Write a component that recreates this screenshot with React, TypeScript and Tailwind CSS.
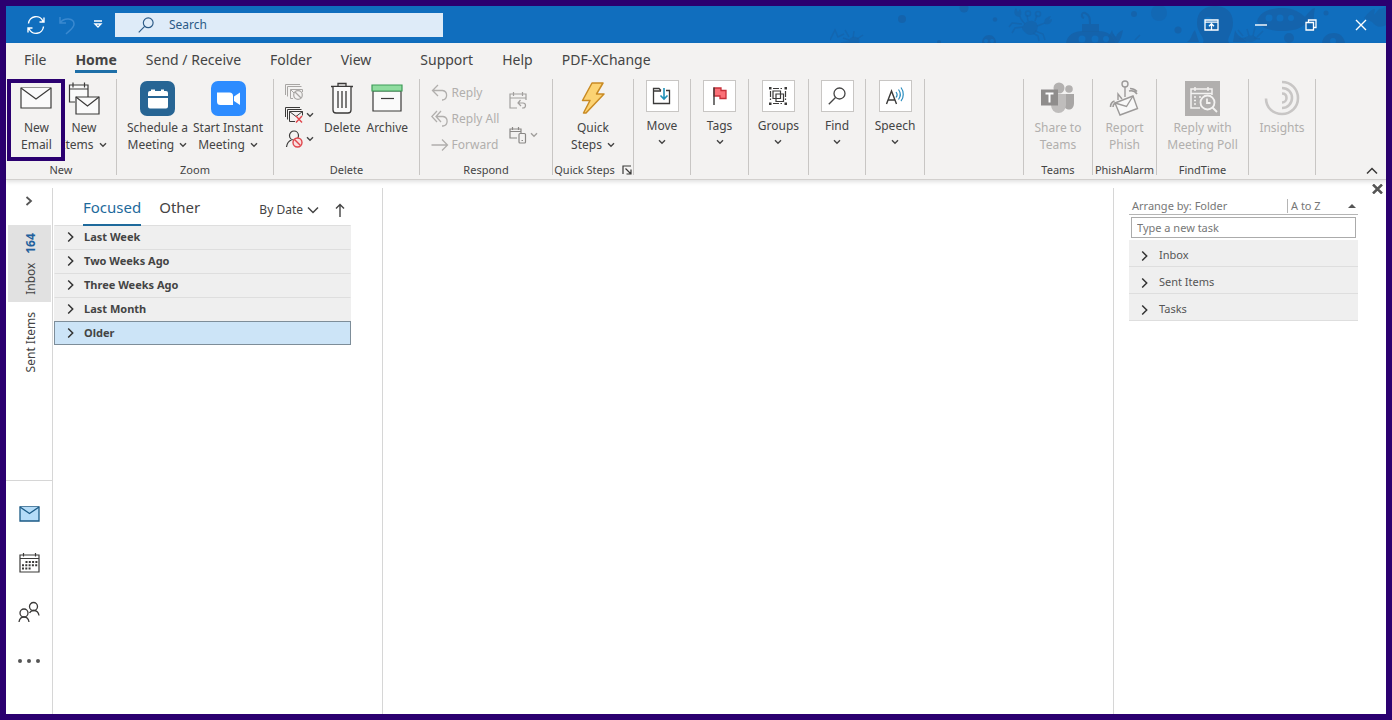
import * as React from "react"
import clsx from "clsx"

const ribbonTabs = ["File", "Home", "Send / Receive", "Folder", "View", "Support", "Help", "PDF-XChange"]
const mailGroups = ["Last Week", "Two Weeks Ago", "Three Weeks Ago", "Last Month", "Older"]
const taskFolders = ["Inbox", "Sent Items", "Tasks"]

type IconProps = { className?: string }

const Chevron = ({ className }: IconProps) => (
  <svg width="8" height="6" viewBox="0 0 8 6" fill="none" stroke="currentColor" strokeWidth="1.4" className={className}>
    <path d="M1 1.2 4 4.2 7 1.2" />
  </svg>
)

const RowChevron = () => (
  <svg width="8" height="12" viewBox="0 0 8 12" fill="none" stroke="#333" strokeWidth="1.5">
    <path d="M1.2 1.5 5.700 6 1.2 10.5" />
  </svg>
)

// Sea creatures drawn faintly behind the window controls
const TitleBarArt = () => (
  <svg width="556" height="37" viewBox="0 0 556 37" className="pointer-events-none absolute top-0 right-0" fill="#1660a6" stroke="none">
    <g fillOpacity="0.75">
      <circle cx="72" cy="13" r="4" />
      <circle cx="134" cy="2" r="4.500" />
      <circle cx="165" cy="13.500" r="2.200" />
      <circle cx="304" cy="8" r="3" />
      <circle cx="329" cy="7" r="8" fillOpacity="0.4" />
      <circle cx="348" cy="24" r="3.500" />
      <circle cx="496" cy="7" r="2.500" />
      <circle cx="459" cy="32" r="5" />
      <circle cx="109" cy="36" r="2" />
      {/* periscope submarine */}
      <path d="M236 37c1-8 8-12 17-12h16c8 0 14 4 16 12z" />
      <path d="M252 18h17v8h-17z" />
      <path d="M260 18c0-5 0-9-5-11-4-1-4 4-1 5" fill="none" stroke="#1660a6" strokeWidth="2" strokeOpacity="0.75" />
      <path d="M278 37c-2-5 2-8 4-13 1 4 2 5 4 7 1-4 4-6 7-7-1 5-2 9-5 13z" />
      {/* octopus */}
      <path d="M373 37c3-5-6-10-6-20C367 5 375 0 385 0s18 5 18 17c0 10-7 15-4 20z" />
      <path d="M365 24c-4 4-3 9-8 12h12zM405 24c2 6 8 8 12 12h-14z" />
      {/* fish */}
      <path d="M427 15C430 6 440 2 452 2s19 5 23 9c3-4 6-8 10-9-1 6-2 10 0 14 1 4 2 6 0 9-5-1-8-4-10-7-5 5-12 7-23 7s-22-3-25-10z" />
      {/* diver */}
      <path d="M492 37c1-7 6-10 12-10s10 4 11 10z" />
      <path d="M152 37c0-5 3-8 7-8s7 3 7 8z" />
    </g>
    <g fill="#106ebe">
      <circle cx="252" cy="33" r="3.500" />
      <circle cx="265" cy="33" r="3.500" />
      <circle cx="276" cy="33" r="3" />
      <circle cx="378" cy="16" r="5" />
      <circle cx="439" cy="12" r="3.500" />
      <circle cx="450" cy="12" r="3.500" />
      <circle cx="461" cy="12" r="3" />
      <circle cx="156" cy="35" r="2" />
      <circle cx="162" cy="35" r="2" />
      <circle cx="503" cy="35" r="3" />
    </g>
    <circle cx="378" cy="16" r="2" />
    {/* crabs */}
    <g fillOpacity="0.6">
      <path d="M192 23c1-6 6-9 11-8s6 7 3 11-8 5-14-3z" />
      <path d="M186 2c-3 4-2 8 3 9 3-2 3-5 1-8l-2 3zM221 10c-5 1-8 4-6 8 4 1 7-1 7-5l-3 1z" />
      <g fill="none" stroke="#1660a6" strokeWidth="1.500" strokeOpacity="0.6">
        <path d="M190 10c0 4 3 5 5 8M215 17c-3 1-5 2-8 3M198 15l-1-6M205 15l2-6M192 18l-10-1-3 4M193 21l-8 1-3 5M205 25l8 3 2 6M203 27l5 3 1 5" />
        <circle cx="198" cy="7.500" r="2.500" />
        <circle cx="208" cy="8" r="2.500" />
        <path d="M15 24l4 7M24 25l-1 7M33 29l-6 4M19 34l-6-2M18 36l-7 1M283 28l3 6M0 34l5-10 3 7 6-3M310 29l-5 5M408 24l5 6M433 25l-6 6M417 23l2 7M425 21l-2 9M409 33l7-1M430 33l-6-1" />
      </g>
      <path d="M18 37c1-5 4-7 8-6s4 4 3 6zM414 33c2-4 10-5 13-1 0 4-11 6-13 1zM534 12c5-6 8-9 11-9l-1 6 5-6c3 0 5-1 7-3v19c-6 3-10 2-14-3z" />
    </g>
  </svg>
)

const Envelope = ({ className }: IconProps) => (
  <svg width="32" height="22" viewBox="0 0 32 22" fill="#fafafa" stroke="#3b3a39" strokeWidth="1.2" className={className}>
    <path d="M1 1h30v20H1z" />
    <path d="M1 1l15 11L31 1" />
  </svg>
)

const NewItemsIcon = () => (
  <svg width="32" height="34" viewBox="0 0 32 34" fill="#fafafa" stroke="#3b3a39" strokeWidth="1.2">
    <path d="M7 21H1.500V4H20v12M1.500 8H20M5 1.500v5M16.500 1.500v5" />
    <path d="M8 16h23v17H8z" />
    <path d="M8 16l11.500 9L31 16" fill="none" />
  </svg>
)

const ZoomCalendarIcon = () => (
  <svg width="35" height="35" viewBox="0 0 35 35">
    <rect width="35" height="35" rx="7" fill="#276594" />
    <path d="M8 12a2 2 0 0 1 2-2h1V8.500h4V10h6V8.500h3V10h2a2 2 0 0 1 2 2v3H8zM8 17h20v8.500a2 2 0 0 1-2 2H10a2 2 0 0 1-2-2z" fill="#fff" />
  </svg>
)

const ZoomVideoIcon = () => (
  <svg width="35" height="35" viewBox="0 0 35 35">
    <rect width="35" height="35" rx="7" fill="#2d8cff" />
    <path d="M6 11.500h12.500a3.500 3.500 0 0 1 3.500 3.500v9H9.500A3.500 3.500 0 0 1 6 20.500zM23 15.500l6-4v12.500l-6-4z" fill="#fff" />
  </svg>
)

const IgnoreIcon = () => (
  <svg width="18" height="16" viewBox="0 0 18 16" fill="none" stroke="#a8a6a4">
    <path d="M.5 11V.5H15M2.500 12.500v-10H16.500" />
    <path d="M8 14.500H5.500v-9h12V8M5.500 5.500 9 9" />
    <circle cx="13" cy="11" r="4.300" fill="#f3f2f1" strokeWidth="1.200" />
    <path d="m10 8 6 6" strokeWidth="1.200" />
  </svg>
)

const CleanUpIcon = () => (
  <svg width="18" height="16" viewBox="0 0 18 16" fill="none" stroke="#3b3a39">
    <path d="M.5 10V.5H15M2.500 12.500v-10h14" />
    <path d="M10 14.500H4.500v-10h13v4M4.500 4.500l6.500 5 6.500-5" />
    <path d="m11 9 6 6.500M17 9l-6 6.500" stroke="#e0464c" strokeWidth="1.400" />
  </svg>
)

const JunkIcon = () => (
  <svg width="18" height="18" viewBox="0 0 18 18" fill="none" stroke="#3b3a39" strokeWidth="1.200">
    <circle cx="9" cy="5.500" r="4.500" />
    <path d="M1.500 17c.5-4 2-6 5-7" />
    <circle cx="12.500" cy="12.500" r="4.500" stroke="#e0464c" fill="#f9dfdf" strokeWidth="1.400" />
    <path d="m9.500 9.500 6 6" stroke="#e0464c" strokeWidth="1.400" />
  </svg>
)

const TrashIcon = () => (
  <svg width="24" height="32" viewBox="0 0 24 32" fill="none" stroke="#3b3a39" strokeWidth="1.300">
    <path d="M1 4.500h22M8 4V1.500h8V4" />
    <path d="M3 5v23a3 3 0 0 0 3 3h12a3 3 0 0 0 3-3V5" fill="#fafafa" />
    <path d="M8 9v17M12 9v17M16 9v17" />
  </svg>
)

const ArchiveIcon = () => (
  <svg width="32" height="28" viewBox="0 0 32 28" strokeWidth="1.200">
    <path d="M2 7h28v20H2z" fill="#fafafa" stroke="#3b3a39" />
    <path d="M1 1h30v6H1z" fill="#8fdc9f" stroke="#3d9b58" />
    <path d="M10 14.500h13" stroke="#3b3a39" />
  </svg>
)

const ReplyIcon = () => (
  <svg width="18" height="18" viewBox="0 0 18 18" fill="none" stroke="#b1afad" strokeWidth="1.300">
    <path d="M7 1 1.500 6.500 7 12M2 6.500h9.500a4.800 4.800 0 0 1 0 9.500H11" />
  </svg>
)

const ReplyAllIcon = () => (
  <svg width="18" height="18" viewBox="0 0 18 18" fill="none" stroke="#b1afad" strokeWidth="1.300">
    <path d="M6 1 .800 6.500 6 12M10 1 5 6.500l5 5.500M5 6.500h7a4.800 4.800 0 0 1 0 9.500h-1" />
  </svg>
)

const ForwardIcon = () => (
  <svg width="18" height="14" viewBox="0 0 18 14" fill="none" stroke="#b1afad" strokeWidth="1.300">
    <path d="M.500 7H16M11 1.500 16.500 7 11 12.500" />
  </svg>
)

const MeetingReplyIcon = () => (
  <svg width="18" height="19" viewBox="0 0 18 19" fill="none" stroke="#a19f9d" strokeWidth="1.200">
    <path d="M8 17H1V3h16v6M1 7h16M4.500 1v4M13.500 1v4" />
    <path d="M11.500 9 9 12l3 3M9 12h5a2.500 2.500 0 0 1 0 5h-1" />
  </svg>
)

const RespondMoreIcon = () => (
  <svg width="18" height="18" viewBox="0 0 18 18" fill="none" stroke="#8a8886" strokeWidth="1.200">
    <path d="M8 12H1V3h11v4M1 5.500h11M3.500 1v3M9.500 1v3" />
    <rect x="10" y="7.500" width="6.500" height="9.500" rx="1" fill="#f3f2f1" />
    <path d="M12.500 14.500h1.500" />
  </svg>
)

const BoltIcon = () => (
  <svg width="24" height="32" viewBox="0 0 24 32" fill="#fcd373" stroke="#c98b24" strokeWidth="1.500" strokeLinejoin="round">
    <path d="M11 1h11l-6.500 11H23L5 31H2.500L9 18.500H1.500z" />
  </svg>
)

const MoveIcon = () => (
  <svg width="20" height="18" viewBox="0 0 20 18" fill="none" stroke="#3b3a39" strokeWidth="1.300">
    <path d="M9 3.500 7 1.500H1.500v15h16v-13H14M1.500 4H9" />
    <path d="M12 1v11M8.500 8.500 12 12l3.500-3.500" stroke="#2091b8" strokeWidth="1.600" />
  </svg>
)

const FlagIcon = () => (
  <svg width="16" height="20" viewBox="0 0 16 20">
    <path d="M2 2h7v2.500h5v8H8V10H2z" fill="#fb7077" stroke="#c72f38" strokeWidth="1.300" />
    <path d="M2 1.500V19" stroke="#3b3a39" strokeWidth="1.400" />
  </svg>
)

const GroupsIcon = () => (
  <svg width="20" height="20" viewBox="0 0 20 20" fill="none" stroke="#3b3a39" strokeWidth="1.200">
    <path d="M5 2.500h9M2.500 5v9M17.500 5v9M5 17.500h9" strokeDasharray="6 1.500" />
    <path d="M5 5h7.500v7.500H5zM8 8h7.500v7.500H8z" />
    <path d="M1 1h2.500v2.500H1zM16.500 1H19v2.500h-2.500zM1 16.500h2.500V19H1zM16.500 16.500H19V19h-2.500z" fill="#3b3a39" stroke="none" />
  </svg>
)

const FindIcon = ({ className }: IconProps) => (
  <svg width="18" height="18" viewBox="0 0 18 18" fill="none" stroke="currentColor" strokeWidth="1.300" className={className}>
    <circle cx="11.500" cy="6.500" r="5.500" />
    <path d="M7.500 10.500.800 17.200" />
  </svg>
)

const SpeechIcon = () => (
  <svg width="20" height="20" viewBox="0 0 20 20" fill="none" stroke="#3b3a39" strokeWidth="1.400">
    <path d="M1.500 18 6.500 5l5 13M3 14h7" />
    <path d="M11 6c1.200 1.500 1.200 4 0 5.500M13.500 3.500c2.200 3 2.200 7 0 10M16 1.500c3 4 3 10 0 13.500" stroke="#2a8dbf" strokeWidth="1.200" />
  </svg>
)

const TeamsIcon = () => (
  <svg width="36" height="34" viewBox="0 0 36 34" fill="#b3b1b0">
    <circle cx="29" cy="8" r="3.800" />
    <path d="M24 13h10v9c0 5-3 7-6 6.500-2-.5-4-2-4-4z" fill="#a8a6a5" />
    <circle cx="19" cy="7" r="5.500" />
    <path d="M11 13h15v11a7.500 8 0 0 1-15 0z" fill="#bfbdbc" />
    <path d="M1 8.500h17v16H1z" fill="#8f8d8c" />
    <path d="M5.500 12.500h8M9.500 12.500v9" stroke="#fff" strokeWidth="2" />
  </svg>
)

const PhishIcon = () => (
  <svg width="30" height="36" viewBox="0 0 30 36" fill="none" stroke="#9c9a99" strokeWidth="1.400">
    <circle cx="16" cy="4" r="3" />
    <path d="M16 7v10M9 20v-6l4 5" />
    <path d="M6 23 24 16l4.500 12.500L11 35z" fill="#f8f8f8" />
    <path d="m6 23 11.500 3.500L24 16" />
    <path d="M20 11c4-1 6 0 8 3M21 8.500c3 0 5 1 7 3M1.500 27c0-3 1-5 4-6M4 27c0-2 .5-3 2-4" strokeWidth="1.600" />
  </svg>
)

const FindTimeIcon = () => (
  <svg width="35" height="35" viewBox="0 0 35 35" fill="none" stroke="#f3f2f1" strokeWidth="1.500">
    <path d="M0 0h35v35H0z" fill="#b1afae" stroke="none" />
    <path d="M15 27H6V8h21v6M6 12.500h21M10 6v4M23 6v4" />
    <path d="M9 16h3M9 19.500h3M9 23h3M14 16h2" strokeDasharray="2 1" />
    <circle cx="22.500" cy="21.500" r="7" fill="#b1afae" strokeWidth="1.800" />
    <path d="M22 17.500V22h3.500M27.500 26.500l4.500 4.500" strokeWidth="1.800" />
  </svg>
)

const InsightsIcon = () => (
  <svg width="36" height="36" viewBox="0 0 36 36" fill="none" stroke="#c8c6c5" strokeWidth="2.600">
    <path d="M18 2c9 0 16 7 16 16s-7 16-16 16S2 27.500 2 18.500" />
    <path d="M18 8c6 0 10 4.500 10 10s-4.500 10-10 10" />
    <path d="M18 13.500c3 0 4.500 2 4.500 4.500s-2 4.500-4.500 4.500" />
  </svg>
)

type RibbonButtonProps = {
  icon: React.ReactNode
  lines: string[]
  menu?: boolean
  disabled?: boolean
  className?: string
}

function RibbonButton({ icon, lines, menu, disabled, className }: RibbonButtonProps) {
  return (
    <button
      type="button"
      disabled={disabled}
      className={clsx("flex flex-col items-center text-xs leading-[17px] whitespace-nowrap", disabled && "text-[#b1afad]", className)}
    >
      <span className="mb-[3px] flex h-9 items-center justify-center">{icon}</span>
      {lines.map((line, i) => (
        <span key={line} className="flex items-center gap-[5px]">
          {line}
          {menu && i === lines.length - 1 && <Chevron />}
        </span>
      ))}
    </button>
  )
}

function BoxButton({ icon, label }: { icon: React.ReactNode; label: string }) {
  return (
    <button type="button" className="flex flex-col items-center pt-px text-xs leading-[17px]">
      <span className="mb-[5px] flex h-8 w-[33px] items-center justify-center border border-[#c8c6c4] bg-white">{icon}</span>
      {label}
      <Chevron className="mt-[5px]" />
    </button>
  )
}

type RibbonGroupProps = { label?: string; className?: string; launcher?: boolean; children?: React.ReactNode }

function RibbonGroup({ label, className, launcher, children }: RibbonGroupProps) {
  return (
    <section className={clsx("mb-1 flex shrink-0 flex-col justify-between border-r border-[#c8c6c4]", className)}>
      <div className="flex justify-center">{children}</div>
      {label && (
        <div className="-mb-[3px] flex h-4 items-center justify-center gap-[7px] text-[11px] leading-4 whitespace-nowrap">
          {label}
          {launcher && (
            <button type="button" aria-label="Quick Steps options">
              <svg width="10" height="10" viewBox="0 0 10 10" fill="none" stroke="#3b3a39" strokeWidth="1.200">
                <path d="M1 9V1h8M3.500 3.500 9 9M9 4.500V9H4.500" />
              </svg>
            </button>
          )}
        </div>
      )}
    </section>
  )
}

function TitleBar() {
  return (
    <header className="relative flex h-[37px] shrink-0 items-center bg-[#106ebe] text-white">
      <TitleBarArt />
      <div className="flex w-[109px] items-center justify-end gap-3 pr-[12px]">
        <button type="button" aria-label="Send and receive all">
          <svg width="20" height="20" viewBox="0 0 20 20" fill="none" stroke="currentColor" strokeWidth="1.400">
            <path d="M2.500 8.500a7.500 7.500 0 0 1 14.500-2M18 2.500v4.500h-4.500M17.500 11.500a7.500 7.500 0 0 1-14.500 2M2 17.500v-4.500h4.500" />
          </svg>
        </button>
        <button type="button" aria-label="Undo" disabled className="text-[#3a89d0]">
          <svg width="18" height="20" viewBox="0 0 18 20" fill="none" stroke="currentColor" strokeWidth="1.500">
            <path d="M2 2v6h6M2 8c4-6 14-5 14 1 0 4-4 6-8 10" />
          </svg>
        </button>
        <button type="button" aria-label="Customize toolbar" className="ml-[5px]">
          <svg width="10" height="9" viewBox="0 0 10 9" fill="none" stroke="currentColor" strokeWidth="1.300">
            <path d="M1 1h8M2 4l3 3 3-3z" />
          </svg>
        </button>
      </div>
      <label className="relative flex h-6 w-[328px] items-center bg-[#deebf8] pl-[23px] text-[#2b5a86]">
        <FindIcon className="size-4 shrink-0" />
        <input type="search" aria-label="Search" placeholder="Search" className="ml-[15px] w-full bg-transparent text-xs outline-none placeholder:text-[#2b5a86]" />
      </label>
      <div className="relative ml-auto flex">
        <button type="button" aria-label="Ribbon display options" className="flex h-9 w-[50px] items-center justify-center">
          <svg width="15" height="12" viewBox="0 0 15 12" fill="none" stroke="currentColor" strokeWidth="1.300">
            <path d="M1 1h13v10H1zM1 3.200h13M7.500 10.500V5M5 7.200 7.500 4.700 10 7.200" />
          </svg>
        </button>
        <button type="button" aria-label="Minimize" className="flex h-9 w-[50px] items-center justify-center">
          <svg width="12" height="2" viewBox="0 0 12 2" fill="currentColor">
            <path d="M0 .300h12v1.400H0z" />
          </svg>
        </button>
        <button type="button" aria-label="Restore" className="flex h-9 w-[50px] items-center justify-center">
          <svg width="12" height="12" viewBox="0 0 12 12" fill="none" stroke="currentColor" strokeWidth="1.300">
            <path d="M1 3.500h7.500V11H1zM3.500 3V1H11v7.500H9" />
          </svg>
        </button>
        <button type="button" aria-label="Close" className="flex h-9 w-[50px] items-center justify-center">
          <svg width="12" height="12" viewBox="0 0 12 12" fill="none" stroke="currentColor" strokeWidth="1.400">
            <path d="m1 1 10 10M11 1 1 11" />
          </svg>
        </button>
      </div>
    </header>
  )
}

function Ribbon() {
  return (
    <div className="relative z-10 shrink-0 border-b border-[#d2d0ce] bg-[#f3f2f1] shadow-[0_2px_4px_rgba(0,0,0,0.12)]">
      <nav className="flex h-9 gap-[29px] pl-[18px] text-sm">
        {ribbonTabs.map((tab) => (
          <button
            key={tab}
            type="button"
            className={clsx(
              "h-[30px] border-b-[3px] pt-[6px] leading-[21px] whitespace-nowrap",
              tab === "Home" ? "border-[#1e6fa8] font-bold" : "border-transparent",
              tab === "Support" && "ml-5"
            )}
          >
            {tab}
          </button>
        ))}
      </nav>
      <div className="flex h-[100px]">
        <RibbonGroup label="New" className="w-[111px]">
          <button
            type="button"
            className="relative z-10 flex h-[82px] w-[58px] shrink-0 flex-col items-center border-4 border-[#2b0070] bg-[#f3f2f1] pt-1 text-xs leading-[17px]"
          >
            <Envelope className="mb-[10px]" />
            <span>New</span>
            <span>Email</span>
          </button>
          <RibbonButton className="-ml-1 pt-px pr-2" icon={<NewItemsIcon />} lines={["New", "Items"]} menu />
        </RibbonGroup>
        <RibbonGroup label="Zoom" className="w-[157px]">
          <div className="flex gap-[5px] pt-px">
            <RibbonButton icon={<ZoomCalendarIcon />} lines={["Schedule a", "Meeting"]} menu />
            <RibbonButton icon={<ZoomVideoIcon />} lines={["Start Instant", "Meeting"]} menu />
          </div>
        </RibbonGroup>
        <RibbonGroup label="Delete" className="w-[146px]">
          <div className="mr-[10px] flex flex-col gap-[7px] pt-[5px]">
            <button type="button" aria-label="Ignore" disabled><IgnoreIcon /></button>
            <button type="button" aria-label="Clean up" className="flex items-center gap-[3px]"><CleanUpIcon /><Chevron /></button>
            <button type="button" aria-label="Junk" className="flex items-center gap-[3px]"><JunkIcon /><Chevron /></button>
          </div>
          <div className="flex gap-[6px] pt-px">
            <RibbonButton icon={<TrashIcon />} lines={["Delete"]} />
            <RibbonButton icon={<ArchiveIcon />} lines={["Archive"]} />
          </div>
        </RibbonGroup>
        <RibbonGroup label="Respond" className="w-[133px]">
          <div className="flex gap-[10px] pt-px pr-[3px]">
            <div className="flex flex-col text-xs text-[#b1afad]">
              <button type="button" disabled className="flex h-[26px] items-center gap-[3px]"><ReplyIcon />Reply</button>
              <button type="button" disabled className="flex h-[26px] items-center gap-[3px] whitespace-nowrap"><ReplyAllIcon />Reply All</button>
              <button type="button" disabled className="flex h-[26px] items-center gap-[3px]"><ForwardIcon />Forward</button>
            </div>
            <div className="flex flex-col gap-4 pt-[11px] text-[#a19f9d]">
              <button type="button" disabled aria-label="Reply with meeting"><MeetingReplyIcon /></button>
              <button type="button" disabled aria-label="More respond actions" className="flex items-center gap-[3px]"><RespondMoreIcon /><Chevron /></button>
            </div>
          </div>
        </RibbonGroup>
        <RibbonGroup label="Quick Steps" className="w-[81px]" launcher>
          <RibbonButton className="pt-px" icon={<BoltIcon />} lines={["Quick", "Steps"]} menu />
        </RibbonGroup>
        <RibbonGroup className="w-[57px]"><BoxButton icon={<MoveIcon />} label="Move" /></RibbonGroup>
        <RibbonGroup className="w-[58px]"><BoxButton icon={<FlagIcon />} label="Tags" /></RibbonGroup>
        <RibbonGroup className="w-[60px]"><BoxButton icon={<GroupsIcon />} label="Groups" /></RibbonGroup>
        <RibbonGroup className="w-[57px]"><BoxButton icon={<FindIcon />} label="Find" /></RibbonGroup>
        <RibbonGroup className="w-[59px]"><BoxButton icon={<SpeechIcon />} label="Speech" /></RibbonGroup>
        <RibbonGroup className="flex-1" />
        <RibbonGroup label="Teams" className="w-[69px]">
          <RibbonButton className="pt-px" icon={<TeamsIcon />} lines={["Share to", "Teams"]} disabled />
        </RibbonGroup>
        <RibbonGroup label="PhishAlarm" className="w-16">
          <RibbonButton className="pt-px" icon={<PhishIcon />} lines={["Report", "Phish"]} disabled />
        </RibbonGroup>
        <RibbonGroup label="FindTime" className="w-[92px]">
          <RibbonButton className="pt-px" icon={<FindTimeIcon />} lines={["Reply with", "Meeting Poll"]} disabled />
        </RibbonGroup>
        <RibbonGroup className="w-[67px]">
          <RibbonButton className="pt-px" icon={<InsightsIcon />} lines={["Insights"]} disabled />
        </RibbonGroup>
        <div className="flex w-[70px] items-end justify-end pr-2 pb-1">
          <button type="button" aria-label="Collapse the ribbon">
            <svg width="12" height="8" viewBox="0 0 12 8" fill="none" stroke="#3b3a39" strokeWidth="1.500">
              <path d="m1 6.500 5-5 5 5" />
            </svg>
          </button>
        </div>
      </div>
    </div>
  )
}

function FolderRail() {
  return (
    <aside className="flex w-[47px] shrink-0 flex-col border-r border-[#d6d6d6]">
      <button type="button" aria-label="Expand folder pane" className="mt-2 flex h-[10px] justify-center">
        <svg width="8" height="10" viewBox="0 0 8 10" fill="none" stroke="#555" strokeWidth="1.800">
          <path d="M1.500 1 6 5 1.500 9" />
        </svg>
      </button>
      <a href="#inbox" className="mt-[19px] mr-px ml-[2px] flex h-[77px] items-center justify-center bg-[#e1e1e1] pl-[3px] text-xs">
        <span className="flex rotate-180 gap-[9px] [writing-mode:vertical-rl]">
          <span>Inbox</span>
          <span className="font-bold text-[#22609c]">164</span>
        </span>
      </a>
      <a href="#sent" className="flex h-20 items-center justify-center pl-[3px] text-xs">
        <span className="rotate-180 [writing-mode:vertical-rl]">Sent Items</span>
      </a>
      <div className="mt-auto flex h-[234px] flex-col items-center border-t border-[#d6d6d6] pt-[8px]">
        <button type="button" aria-label="Mail" className="flex h-[49px] items-center">
          <svg width="21" height="16" viewBox="0 0 21 16" fill="#b5dcf8" stroke="#1b5a85" strokeWidth="1.300">
            <path d="M1 1h19v14H1z" />
            <path d="m1 1 9.500 6.500L20 1" />
          </svg>
        </button>
        <button type="button" aria-label="Calendar" className="flex h-[49px] items-center">
          <svg width="21" height="21" viewBox="0 0 21 21" fill="none" stroke="#3b3a39" strokeWidth="1.200">
            <path d="M1 3h19v17H1zM1 6.500h19M4.500 1v3.500M16.500 1v3.500" />
            <path d="M6.500 10h12M3 13.200h15.500M3 16.500h9.500" strokeWidth="2" strokeDasharray="2 1.300" />
          </svg>
        </button>
        <button type="button" aria-label="People" className="flex h-[49px] items-center">
          <svg width="22" height="22" viewBox="0 0 22 22" fill="none" stroke="#3b3a39" strokeWidth="1.300">
            <circle cx="15.500" cy="5.500" r="4" />
            <circle cx="6" cy="12" r="4" />
            <path d="M1 21c.5-3.500 2-5 5-5s4.500 1.500 5 5M11.500 12c1-2 2-2.500 4-2.500 3 0 5 1.500 5.500 5" />
          </svg>
        </button>
        <button type="button" aria-label="More" className="flex h-[49px] items-center">
          <svg width="22" height="4" viewBox="0 0 22 4" fill="#555">
            <circle cx="2" cy="2" r="2" />
            <circle cx="11" cy="2" r="2" />
            <circle cx="20" cy="2" r="2" />
          </svg>
        </button>
      </div>
    </aside>
  )
}

function MessageList() {
  return (
    <section className="w-[330px] shrink-0 border-r border-[#d6d6d6]">
      <div className="mr-[31px] flex h-[37px] items-center pl-[30px] text-[15px]">
        <button type="button" className="h-[38px] border-b-2 border-[#1e6a9c] pt-1 text-[#1e6a9c]">Focused</button>
        <button type="button" className="ml-[18px] pt-[2px]">Other</button>
        <button type="button" className="ml-auto flex items-center gap-1 pt-[6px] text-xs">
          By Date
          <svg width="12" height="8" viewBox="0 0 12 8" fill="none" stroke="currentColor" strokeWidth="1.500"><path d="m1 1.500 5 5 5-5" /></svg>
        </button>
        <button type="button" aria-label="Sort order" className="mr-[6px] ml-4 pt-[6px]">
          <svg width="10" height="14" viewBox="0 0 10 14" fill="none" stroke="currentColor" strokeWidth="1.400"><path d="M5 14V1.500M1 5.500l4-4 4 4" /></svg>
        </button>
      </div>
      <ul className="mr-[31px] ml-px text-[11px] font-bold">
        {mailGroups.map((name) => (
          <li key={name}>
            <button
              type="button"
              className={clsx(
                "flex h-6 w-full items-center gap-[9px] border pl-3",
                name === "Older" ? "border-[#7d8d99] bg-[#cce4f7]" : "border-[#efefef] border-t-[#dedede] bg-[#efefef]"
              )}
            >
              <RowChevron />
              {name}
            </button>
          </li>
        ))}
      </ul>
    </section>
  )
}

function TaskPane() {
  return (
    <aside className="w-[273px] shrink-0 border-l border-[#d6d6d6] pr-7 pl-[15px] text-[11px] text-[#555]">
      <div className="mt-[10px] flex h-[17px] items-center border-b border-[#b5b5b5] pl-[3px] text-[#777]">
        <button type="button">Arrange by: Folder</button>
        <button type="button" className="ml-auto flex h-[14px] w-[71px] items-center justify-between border-l border-[#b5b5b5] pr-[2px] pl-[3px]">
          A to Z
          <svg width="8" height="4" viewBox="0 0 8 4" fill="#555"><path d="M0 4 4 0l4 4z" /></svg>
        </button>
      </div>
      <input
        type="text"
        aria-label="New task"
        placeholder="Type a new task"
        className="mx-[2px] mt-[2px] block h-[21px] w-[225px] border border-[#ababab] bg-white px-[5px] placeholder:text-[#777]"
      />
      <ul className="mt-[2px]">
        {taskFolders.map((folder) => (
          <li key={folder}>
            <button type="button" className="flex h-[27px] w-full items-center gap-[10px] border-b border-[#dedede] bg-[#efefef] pt-[5px] pl-3">
              <RowChevron />
              {folder}
            </button>
          </li>
        ))}
      </ul>
    </aside>
  )
}

export default function App() {
  return (
    <div className="flex min-h-screen flex-col border-6 border-[#2b0070] bg-white font-['Noto_Sans','Open_Sans',sans-serif] text-[#444]">
      <TitleBar />
      <Ribbon />
      <main className="relative mt-2 flex flex-1">
        <FolderRail />
        <MessageList />
        <section className="flex-1" aria-label="Reading pane" />
        <TaskPane />
        <button type="button" aria-label="Close task pane" className="absolute -top-1 right-[3px]">
          <svg width="11" height="10" viewBox="0 0 11 10" stroke="#555" strokeWidth="2.500"><path d="m1 .500 9 9M10 .500l-9 9" /></svg>
        </button>
      </main>
    </div>
  )
}
